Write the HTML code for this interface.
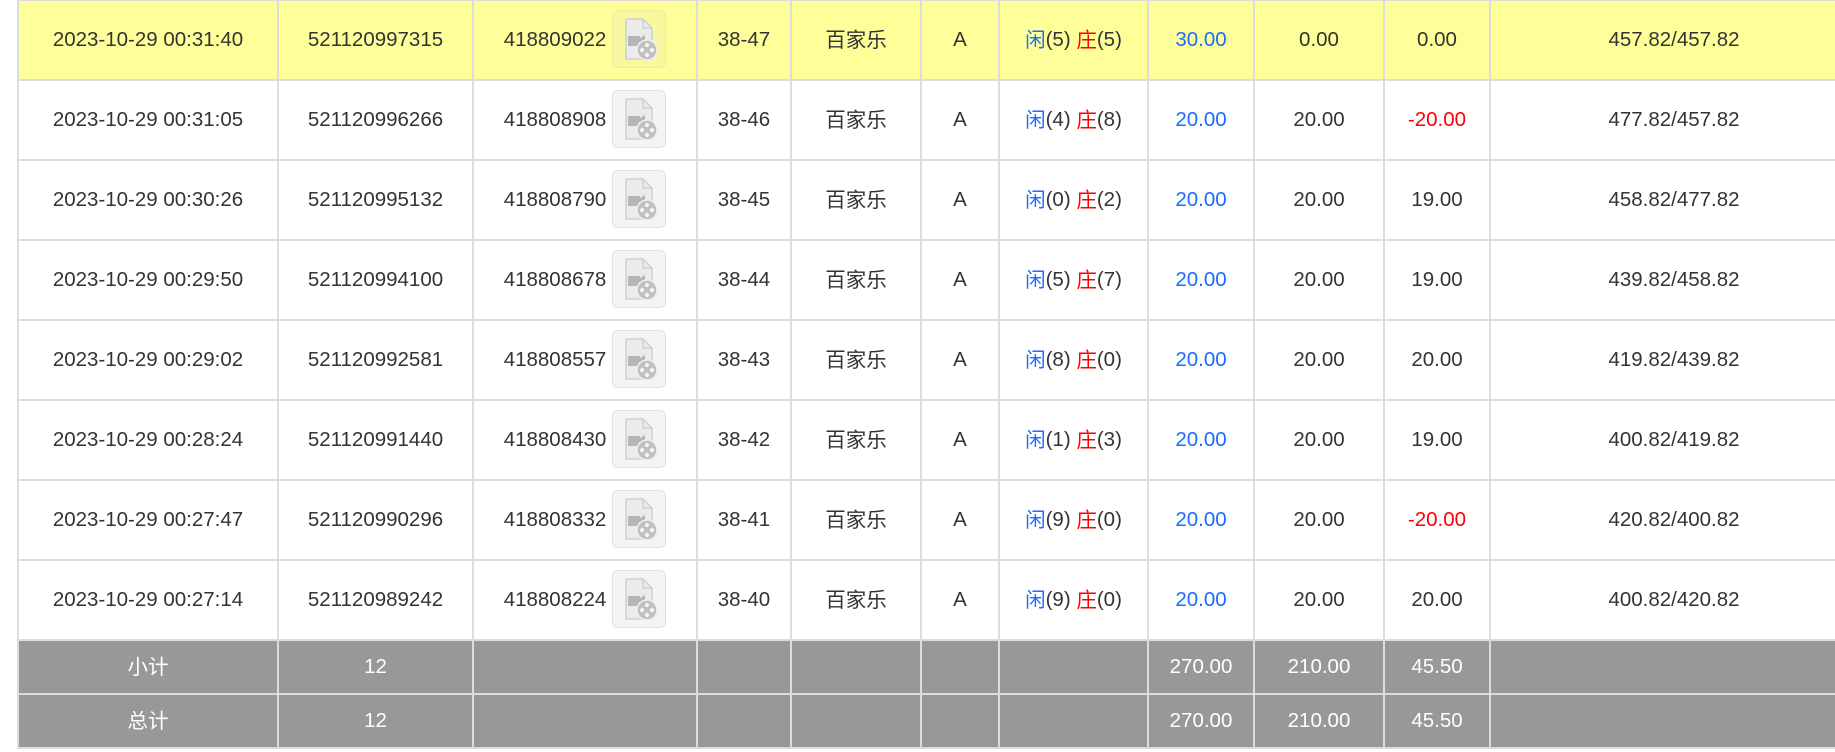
<!DOCTYPE html>
<html><head><meta charset="utf-8">
<style>
html,body{margin:0;padding:0;background:#fff;width:1835px;height:752px;overflow:hidden}
table{position:absolute;left:17px;top:-1px;border-collapse:collapse;table-layout:fixed;width:1840px;
font-family:"Liberation Sans","Noto Sans CJK SC",sans-serif;font-size:20.5px;color:#333}
td{border:2px solid #ddd;text-align:center;padding:0;height:78px;white-space:nowrap;overflow:hidden;line-height:24px}
.c{font-family:"Noto Sans CJK SC",sans-serif;display:inline-block;height:24px;line-height:24px;vertical-align:top;position:relative;top:-2px}
tr.y td{background:#ffff99}
tr.g td{background:#989898;color:#fff;height:52px}
.b{color:#1a6eff}.r{color:#f00}
.ic{display:inline-block;vertical-align:middle;width:52px;height:56px;border:1px solid #e2e2e2;border-radius:6px;background:#f4f4f4;margin-left:6px;position:relative;top:-1px}
tr.y .ic{background:#f8f8a0;border-color:#eeee9a}
.n{display:inline-block;vertical-align:middle}
</style></head><body>
<table>
<colgroup><col style="width:260px"><col style="width:195px"><col style="width:224px"><col style="width:94px"><col style="width:130px"><col style="width:78px"><col style="width:149px"><col style="width:106px"><col style="width:130px"><col style="width:106px"><col style="width:368px"></colgroup>
<tbody id="tb"></tbody>
</table>
<script>
var ic='<span class="ic"><svg width="52" height="56" viewBox="0 0 52 56"><path d="M13 8h17l9 9v31H13z" fill="#ebebeb" stroke="#d0d0d0" stroke-width="1.5"/><path d="M30 8v9h9" fill="none" stroke="#d0d0d0" stroke-width="1.5"/><rect x="15" y="25" width="12" height="10" fill="#b5b5b5"/><path d="M27 27l5-3v12l-5-3z" fill="#b5b5b5"/><circle cx="34" cy="39" r="10" fill="#c0c0c0" stroke="#f0f0f0" stroke-width="1.5"/><circle cx="34" cy="34" r="2.2" fill="#f2f2f2"/><circle cx="34" cy="44" r="2.2" fill="#f2f2f2"/><circle cx="29" cy="39" r="2.2" fill="#f2f2f2"/><circle cx="39" cy="39" r="2.2" fill="#f2f2f2"/></svg></span>';
var d=[
["00:31:40","521120997315","418809022","38-47","5","5","30.00","0.00","0.00","457.82/457.82"],
["00:31:05","521120996266","418808908","38-46","4","8","20.00","20.00","-20.00","477.82/457.82"],
["00:30:26","521120995132","418808790","38-45","0","2","20.00","20.00","19.00","458.82/477.82"],
["00:29:50","521120994100","418808678","38-44","5","7","20.00","20.00","19.00","439.82/458.82"],
["00:29:02","521120992581","418808557","38-43","8","0","20.00","20.00","20.00","419.82/439.82"],
["00:28:24","521120991440","418808430","38-42","1","3","20.00","20.00","19.00","400.82/419.82"],
["00:27:47","521120990296","418808332","38-41","9","0","20.00","20.00","-20.00","420.82/400.82"],
["00:27:14","521120989242","418808224","38-40","9","0","20.00","20.00","20.00","400.82/420.82"]];
var h='';
d.forEach(function(r,i){
h+='<tr'+(i==0?' class="y"':'')+'><td>2023-10-29 '+r[0]+'</td><td>'+r[1]+'</td><td><span class="n">'+r[2]+'</span>'+ic+'</td><td>'+r[3]+'</td><td><span class="c">百家乐</span></td><td>A</td><td><span class="b c">闲</span>('+r[4]+') <span class="r c">庄</span>('+r[5]+')</td><td class="b">'+r[6]+'</td><td>'+r[7]+'</td><td'+(r[8][0]=='-'?' class="r"':'')+'>'+r[8]+'</td><td>'+r[9]+'</td></tr>';
});
['小计','总计'].forEach(function(t){h+='<tr class="g"><td><span class="c">'+t+'</span></td><td>12</td><td></td><td></td><td></td><td></td><td></td><td>270.00</td><td>210.00</td><td>45.50</td><td></td></tr>';});
document.getElementById('tb').innerHTML=h;
</script>
</body></html>
